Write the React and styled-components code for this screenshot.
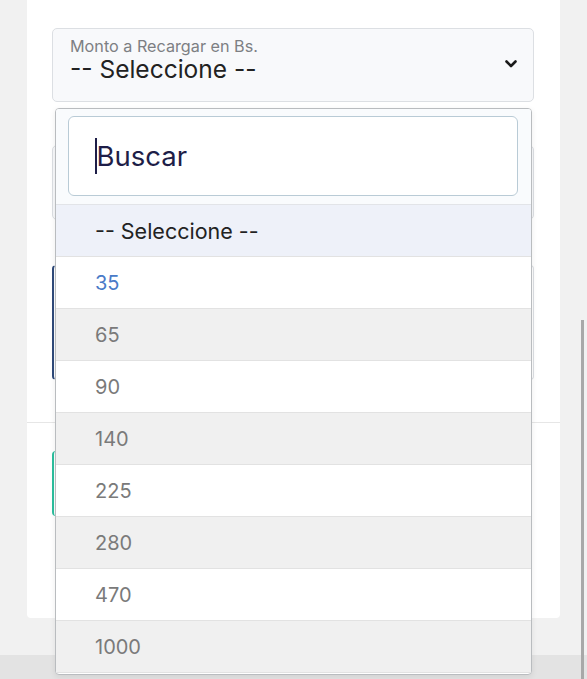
import React from "react";
import styled, { createGlobalStyle } from "styled-components";

const GlobalStyle = createGlobalStyle`
  html, body {
    margin: 0;
    padding: 0;
    background: #f1f1f1;
    overflow: hidden;
  }
  * { box-sizing: border-box; }
`;

const amounts = ["35", "65", "90", "140", "225", "280", "470", "1000"];

const App = () => {
  return (
    <>
      <GlobalStyle />
      <Page>
        <Card>
          <FieldWrap>
            <SelectBox>
              <SelectLabel>Monto a Recargar en Bs.</SelectLabel>
              <SelectValue>-- Seleccione --</SelectValue>
              <Chevron viewBox="0 0 12 8">
                <polyline points="1.5,1.5 6,6 10.5,1.5" />
              </Chevron>
            </SelectBox>
            <Dropdown>
              <SearchArea>
                <SearchBox>
                  <Caret />
                  Buscar
                </SearchBox>
              </SearchArea>
              <Option $header>-- Seleccione --</Option>
              {amounts.map((a, i) => (
                <Option key={a} $alt={i % 2 === 1} $active={i === 0}>
                  {a}
                </Option>
              ))}
            </Dropdown>
          </FieldWrap>
          <PlainField />
          <InfoBox />
          <Divider />
          <ActionBox />
        </Card>
        <Footer />
        <ScrollThumb />
      </Page>
    </>
  );
};

export default App;

const Page = styled.div`
  position: relative;
  width: 587px;
  height: 679px;
  overflow: hidden;
  background: #f1f1f1;
  font-family: Inter, "Open Sans", sans-serif;
  padding-left: 27px;
`;
const Card = styled.div`
  width: 533px;
  height: 618px;
  background: #fff;
  border-radius: 0 0 4px 4px;
  padding: 28px 26px 0 25px;
  display: flex;
  flex-direction: column;
`;
const FieldWrap = styled.div`
  position: relative;
  z-index: 2;
`;
const SelectBox = styled.div`
  position: relative;
  height: 74px;
  border: 1px solid #dcdfe3;
  border-radius: 5px;
  background: #f8f9fb;
  padding: 7px 17px;
`;
const SelectLabel = styled.div`
  font-size: 16.2px;
  line-height: 20px;
  color: #7d7f83;
`;
const SelectValue = styled.div`
  font-size: 24.5px;
  line-height: 26px;
  color: #222;
`;
const Chevron = styled.svg`
  position: absolute;
  right: 16px;
  top: 31px;
  width: 12px;
  height: 8px;
  fill: none;
  stroke: #1a1a1a;
  stroke-width: 2.6;
  stroke-linecap: round;
  stroke-linejoin: round;
`;
const Dropdown = styled.div`
  position: absolute;
  top: 80px;
  left: 3px;
  width: 477px;
  height: 567px;
  border: 1px solid #b9bcbf;
  border-radius: 4px;
  background: #fff;
  box-shadow: 0 2px 6px rgba(0, 0, 0, 0.08);
  overflow: hidden;
`;
const SearchArea = styled.div`
  padding: 7px 13px 8px 12px;
  background: #f9fbfd;
  border-bottom: 1px solid #e2e4e8;
`;
const SearchBox = styled.div`
  height: 80px;
  border: 1px solid #b9cbd6;
  border-radius: 6px;
  background: #fff;
  display: flex;
  align-items: center;
  padding-left: 26px;
  font-size: 27.5px;
  color: #1e1e48;
`;
const Caret = styled.span`
  display: inline-block;
  width: 1.5px;
  height: 36px;
  background: #1e1e48;
`;
const Option = styled.div`
  height: 52px;
  display: flex;
  align-items: center;
  padding-left: 39px;
  font-size: ${(p) => (p.$header ? "21.5px" : "20px")};
  color: ${(p) => (p.$header ? "#222" : p.$active ? "#4a7bc8" : "#7a7a7a")};
  background: ${(p) => (p.$header ? "#eef1f9" : p.$alt ? "#f0f0f0" : "#fff")};
  border-bottom: 1px solid #e2e2e2;
`;
const PlainField = styled.div`
  margin-top: 43px;
  height: 75px;
  border: 1px solid #dcdfe3;
  border-radius: 5px;
  background: #f8f9fb;
`;
const InfoBox = styled.div`
  margin-top: 45px;
  height: 115px;
  border: 1px solid #dcdfe3;
  border-left: 2px solid #2f4a7a;
  border-radius: 4px;
  background: #fff;
`;
const Divider = styled.div`
  margin: 42px -26px 0 -25px;
  border-top: 1px solid #e6e6e6;
`;
const ActionBox = styled.div`
  margin-top: 28px;
  height: 65px;
  border-left: 2px solid #2cbf9e;
  border-radius: 4px;
  background: #fff;
`;
const Footer = styled.div`
  margin-top: 37px;
  margin-left: -27px;
  height: 24px;
  background: #e3e3e3;
`;
const ScrollThumb = styled.div`
  position: absolute;
  right: 3px;
  top: 320px;
  width: 3px;
  height: 359px;
  background: #a8a8a8;
`;
